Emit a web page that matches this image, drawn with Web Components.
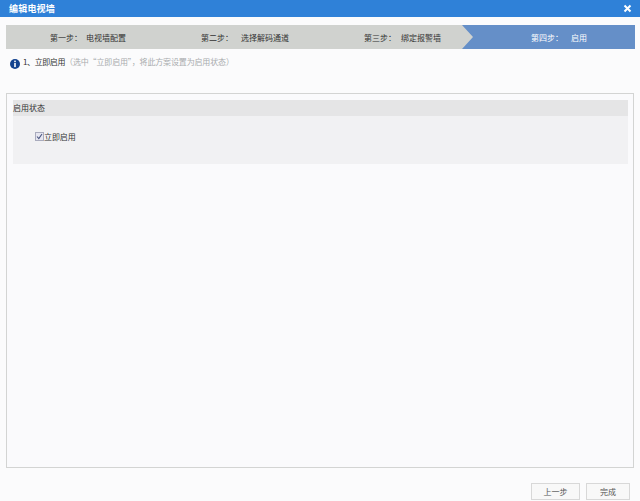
<!DOCTYPE html>
<html lang="zh">
<head>
<meta charset="utf-8">
<title>编辑电视墙</title>
<style>
html, body { margin: 0; padding: 0; }
body {
  width: 640px;
  height: 501px;
  overflow: hidden;
  background: #fbfbfc;
  font-family: "Noto Sans CJK SC", "Liberation Sans", sans-serif;
  font-size: 8px;
  color: #333;
}
</style>
</head>
<body>
<wall-dialog heading="编辑电视墙">
  <wizard-steps>
    <wizard-step label="第一步：" name="电视墙配置" start="44" gap="4" width="151"></wizard-step>
    <wizard-step label="第二步：" name="选择解码通道" start="44" gap="8" width="163"></wizard-step>
    <wizard-step label="第三步：" name="绑定报警墙" start="44" gap="5" width="142"></wizard-step>
    <wizard-step label="第四步：" name="启用" start="69" gap="8" width="173" active></wizard-step>
  </wizard-steps>
  <info-tip lead="1、立即启用" note="（选中“立即启用”，将此方案设置为启用状态）"></info-tip>
  <status-panel heading="启用状态">
    <check-field label="立即启用" checked></check-field>
  </status-panel>
  <dialog-button slot="actions" width="49">上一步</dialog-button>
  <dialog-button slot="actions" width="44">完成</dialog-button>
</wall-dialog>

<script>
class WallDialog extends HTMLElement {
  constructor() {
    super();
    this.attachShadow({ mode: 'open' });
    this.shadowRoot.innerHTML = `
<style>
:host { display: flex; flex-direction: column; height: 501px; }
.bar {
  height: 17px;
  flex: none;
  display: flex;
  align-items: center;
  justify-content: space-between;
  padding: 0 9px;
  background: #2f81d8;
  color: #fff;
  font-size: 9px;
  font-weight: 700;
  letter-spacing: 0.2px;
}
svg { display: block; }
.main { flex: 1; display: flex; flex-direction: column; padding: 8px 5px 0 6px; }
.actions { display: flex; justify-content: flex-end; gap: 6px; padding: 15px 10px 1px 0; }
</style>
<div class="bar">
  <span class="heading"></span>
  <svg width="9" height="9" viewBox="0 0 9 9" style="margin-right:-1px"><path d="M1.5 1.5l6 6M7.5 1.5l-6 6" stroke="#fff" stroke-width="2"/></svg>
</div>
<div class="main"><slot></slot></div>
<div class="actions"><slot name="actions"></slot></div>`;
    this.shadowRoot.querySelector('.heading').textContent = this.getAttribute('heading');
  }
}

class WizardSteps extends HTMLElement {
  constructor() {
    super();
    this.attachShadow({ mode: 'open' });
    this.shadowRoot.innerHTML = `
<style>
:host { display: flex; height: 24px; flex: none; background: #d0d2cf; }
</style>
<slot></slot>`;
  }
}

class WizardStep extends HTMLElement {
  constructor() {
    super();
    this.attachShadow({ mode: 'open' });
    this.shadowRoot.innerHTML = `
<style>
:host { display: flex; align-items: center; flex: none; box-sizing: border-box; color: #333; white-space: nowrap; }
:host([active]) {
  background: #658fc8;
  color: #fff;
  clip-path: polygon(0 0, 100% 0, 100% 100%, 0 100%, 11px 50%);
}
</style>
<span class="label"></span><span class="name"></span>`;
    const r = this.shadowRoot;
    r.querySelector('.label').textContent = this.getAttribute('label');
    r.querySelector('.name').textContent = this.getAttribute('name');
    r.querySelector('.name').style.marginLeft = this.getAttribute('gap') + 'px';
    this.style.width = this.getAttribute('width') + 'px';
    this.style.paddingLeft = this.getAttribute('start') + 'px';
  }
}

class InfoTip extends HTMLElement {
  constructor() {
    super();
    this.attachShadow({ mode: 'open' });
    this.shadowRoot.innerHTML = `
<style>
:host { display: flex; align-items: center; height: 15px; margin-top: 5px; padding-left: 4px; flex: none; white-space: nowrap; }
svg { display: block; margin-right: 3px; margin-top: 5px; }
.lead { color: #333; letter-spacing: -0.4px; }
.note { color: #a9abae; letter-spacing: -0.15px; }
</style>
<svg width="10" height="10" viewBox="0 0 10 10">
  <circle cx="5" cy="5" r="5" fill="#13438f"/>
  <rect x="4.2" y="1.6" width="1.6" height="1.5" fill="#fff"/>
  <rect x="4.2" y="3.9" width="1.6" height="4.2" fill="#fff"/>
</svg>
<span class="lead"></span><span class="note"></span>`;
    this.shadowRoot.querySelector('.lead').textContent = this.getAttribute('lead');
    this.shadowRoot.querySelector('.note').textContent = this.getAttribute('note');
  }
}

class StatusPanel extends HTMLElement {
  constructor() {
    super();
    this.attachShadow({ mode: 'open' });
    this.shadowRoot.innerHTML = `
<style>
:host {
  display: block;
  flex: none;
  box-sizing: border-box;
  height: 375px;
  margin: 24px 1px 0 0;
  padding: 6px 5px 0 6px;
  border: 1px solid #d3d4d3;
  background: #fafafc;
}
.head { height: 16px; line-height: 15px; background: #e5e5e6; color: #333; }
.body { height: 48px; box-sizing: border-box; padding: 14px 0 0 22px; background: #f1f1f3; }
</style>
<div class="head"></div>
<div class="body"><slot></slot></div>`;
    this.shadowRoot.querySelector('.head').textContent = this.getAttribute('heading');
  }
}

class CheckField extends HTMLElement {
  constructor() {
    super();
    this.attachShadow({ mode: 'open' });
    this.shadowRoot.innerHTML = `
<style>
:host { display: flex; align-items: center; height: 12px; color: #333; }
svg { display: block; }
span { letter-spacing: -0.1px; }
</style>
<svg width="9" height="9" viewBox="0 0 9 9">
  <rect x="0.5" y="0.5" width="8" height="8" fill="#e6e6f0" stroke="#a9abbd"/>
  <path d="M2 4.5l1.8 2L7 2" fill="none" stroke="#4a5680" stroke-width="1.1"/>
</svg>
<span></span>`;
    this.shadowRoot.querySelector('span').textContent = this.getAttribute('label');
  }
}

class DialogButton extends HTMLElement {
  constructor() {
    super();
    this.attachShadow({ mode: 'open' });
    this.shadowRoot.innerHTML = `
<style>
:host {
  display: flex;
  align-items: center;
  justify-content: center;
  box-sizing: border-box;
  height: 17px;
  border: 1px solid #d8d8d8;
  background: #f8f8f8;
  color: #555;
  cursor: pointer;
}
</style>
<slot></slot>`;
    this.style.width = this.getAttribute('width') + 'px';
  }
}

customElements.define('wall-dialog', WallDialog);
customElements.define('wizard-steps', WizardSteps);
customElements.define('wizard-step', WizardStep);
customElements.define('info-tip', InfoTip);
customElements.define('status-panel', StatusPanel);
customElements.define('check-field', CheckField);
customElements.define('dialog-button', DialogButton);
</script>
</body>
</html>
